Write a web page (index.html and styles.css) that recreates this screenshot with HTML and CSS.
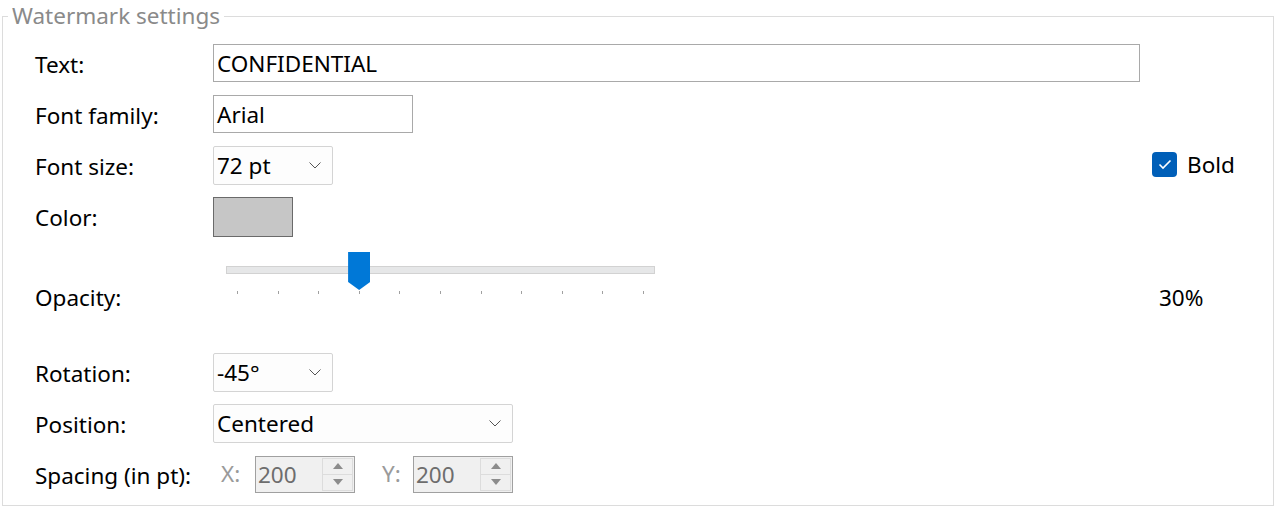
FILE: index.html
```html
<!DOCTYPE html>
<html>
<head>
<meta charset="utf-8">
<link rel="stylesheet" href="styles.css">
</head>
<body>
<fieldset class="group">
  <legend class="group-title">Watermark settings</legend>
  <div class="form">
    <div class="label row-text">Text:</div>
    <div class="field row-text"><div class="textbox wide">CONFIDENTIAL</div></div>

    <div class="label row-family">Font family:</div>
    <div class="field row-family"><div class="textbox w200">Arial</div></div>

    <div class="label row-size">Font size:</div>
    <div class="field row-size">
      <div class="combo w120"><span>72 pt</span><svg class="chev" width="12" height="7" viewBox="0 0 12 7"><path d="M0.5 0.5 L6 6 L11.5 0.5" fill="none" stroke="#555" stroke-width="1"/></svg></div>
    </div>
    <div class="side row-size">
      <label class="check"><span class="box"><svg width="14" height="11" viewBox="0 0 14 11"><path d="M1.5 5.5 L5 9 L12.5 1.5" fill="none" stroke="#fff" stroke-width="1.6"/></svg></span>Bold</label>
    </div>

    <div class="label row-color">Color:</div>
    <div class="field row-color"><div class="swatch"></div></div>

    <div class="label row-opacity">Opacity:</div>
    <div class="field row-opacity">
      <div class="slider">
        <div class="track"></div>
        <div class="thumb"></div>
        <div class="ticks">
          <i></i><i></i><i></i><i></i><i></i><i></i><i></i><i></i><i></i><i></i><i></i>
        </div>
      </div>
    </div>
    <div class="side row-opacity"><span class="value">30%</span></div>

    <div class="label row-rot">Rotation:</div>
    <div class="field row-rot">
      <div class="combo w120"><span>-45°</span><svg class="chev" width="12" height="7" viewBox="0 0 12 7"><path d="M0.5 0.5 L6 6 L11.5 0.5" fill="none" stroke="#555" stroke-width="1"/></svg></div>
    </div>

    <div class="label row-pos">Position:</div>
    <div class="field row-pos">
      <div class="combo w300"><span>Centered</span><svg class="chev" width="12" height="7" viewBox="0 0 12 7"><path d="M0.5 0.5 L6 6 L11.5 0.5" fill="none" stroke="#555" stroke-width="1"/></svg></div>
    </div>

    <div class="label row-spc">Spacing (in pt):</div>
    <div class="field row-spc spacing">
      <span class="axis ax-x">X:</span>
      <div class="spin">
        <span class="spin-val">200</span>
        <div class="spin-btns">
          <div class="spin-btn"><svg width="10" height="6" viewBox="0 0 10 6"><path d="M0 6 L5 0 L10 6 Z" fill="#8c8c8c"/></svg></div>
          <div class="spin-btn"><svg width="10" height="6" viewBox="0 0 10 6"><path d="M0 0 L5 6 L10 0 Z" fill="#8c8c8c"/></svg></div>
        </div>
      </div>
      <span class="axis ax-y">Y:</span>
      <div class="spin">
        <span class="spin-val">200</span>
        <div class="spin-btns">
          <div class="spin-btn"><svg width="10" height="6" viewBox="0 0 10 6"><path d="M0 6 L5 0 L10 6 Z" fill="#8c8c8c"/></svg></div>
          <div class="spin-btn"><svg width="10" height="6" viewBox="0 0 10 6"><path d="M0 0 L5 6 L10 0 Z" fill="#8c8c8c"/></svg></div>
        </div>
      </div>
    </div>
  </div>
</fieldset>
</body>
</html>
```

FILE: styles.css
```css
html, body {
  margin: 0;
  padding: 0;
  background: #ffffff;
}

body {
  font-family: "Noto Sans", "Open Sans", sans-serif;
  font-size: 22.5px;
  color: #000;
  width: 1274px;
  height: 507px;
  overflow: hidden;
}

.group {
  box-sizing: border-box;
  margin: 2px 0 0 2px;
  width: 1272px;
  height: 504px;
  border: 1px solid #dcdcdc;
  padding: 14px 0 0 32px;
  min-width: 0;
}

.group-title {
  color: #8a8a8a;
  padding: 0 4px;
  margin-left: -27px;
  line-height: 28px;
}

.form {
  display: grid;
  grid-template-columns: 166px 927px 1fr;
  grid-template-rows: 38px 38px 38px 38px 92px 38px 38px 38px;
  column-gap: 12px;
  row-gap: 13px;
}

.label {
  grid-column: 1;
  display: flex;
  align-items: center;
  line-height: 1;
  white-space: nowrap;
  padding-top: 4px;
}

.field {
  grid-column: 2;
  display: flex;
  align-items: center;
}

.side {
  grid-column: 3;
  display: flex;
  align-items: center;
}

.row-text { grid-row: 1; }
.row-family { grid-row: 2; }
.row-size { grid-row: 3; }
.row-color { grid-row: 4; }
.row-opacity { grid-row: 5; }
.row-rot { grid-row: 6; }
.row-pos { grid-row: 7; }
.row-spc { grid-row: 8; }

.label.row-opacity,
.side.row-opacity {
  align-items: flex-start;
  padding-top: 39px;
}

.textbox {
  box-sizing: border-box;
  height: 38px;
  border: 1px solid #a9a9a9;
  background: #fff;
  padding: 0 3px;
  display: flex;
  align-items: center;
  white-space: nowrap;
}

.wide { width: 927px; }
.w200 { width: 200px; }
.w120 { width: 120px; }
.w300 { width: 300px; }

.combo {
  box-sizing: border-box;
  height: 39px;
  border: 1px solid #d4d4d4;
  border-radius: 2px;
  background: #fdfdfd;
  padding: 0 11px 0 3px;
  display: flex;
  align-items: center;
  justify-content: space-between;
}

.chev {
  display: block;
}

.check {
  display: flex;
  align-items: center;
  gap: 10px;
  margin-top: -2px;
}

.box {
  width: 25px;
  height: 25px;
  border-radius: 4px;
  background: #005fb8;
  display: flex;
  align-items: center;
  justify-content: center;
}

.box svg { display: block; }

.swatch {
  box-sizing: border-box;
  width: 80px;
  height: 40px;
  background: #c6c6c6;
  border: 1px solid #6a6a6a;
  margin-top: 1px;
}

.field.row-opacity {
  align-items: flex-start;
}

.slider {
  position: relative;
  margin-left: 13px;
  width: 429px;
  height: 48px;
}

.track {
  position: absolute;
  left: 0;
  right: 0;
  top: 18px;
  height: 8px;
  box-sizing: border-box;
  background: #e6e7e8;
  border: 1px solid #d2d2d2;
}

.thumb {
  position: absolute;
  top: 4px;
  left: calc(11px + (100% - 22px) * 0.3);
  width: 22px;
  height: 38px;
  transform: translateX(-50%);
  background: #0078d7;
  clip-path: polygon(0 0, 100% 0, 100% 79%, 50% 100%, 0 79%);
}

.ticks {
  position: absolute;
  left: 11px;
  right: 11px;
  top: 43px;
  height: 3px;
  display: flex;
  justify-content: space-between;
}

.ticks i {
  display: block;
  width: 1px;
  height: 3px;
  background: #a0a0a0;
}

.value {
  padding-left: 7px;
  line-height: 1;
}

.axis {
  color: #9a9a9a;
  line-height: 1;
}

.ax-x {
  margin-left: 8px;
  width: 34px;
}

.ax-y {
  margin-left: 27px;
  width: 31px;
}

.spin {
  box-sizing: border-box;
  width: 100px;
  height: 37px;
  border: 1px solid #a0a0a0;
  background: #f0f0f0;
  display: flex;
  align-items: center;
  justify-content: space-between;
  padding: 1px 1px 1px 2px;
}

.spin-val {
  color: #6d6d6d;
}

.spin-btns {
  display: flex;
  flex-direction: column;
  width: 31px;
  height: 33px;
}

.spin-btn {
  flex: 1;
  box-sizing: border-box;
  border: 1px solid #dcdcdc;
  background: #f0f0f0;
  display: flex;
  align-items: center;
  justify-content: center;
}

.spin-btn + .spin-btn {
  border-top: none;
}
```
